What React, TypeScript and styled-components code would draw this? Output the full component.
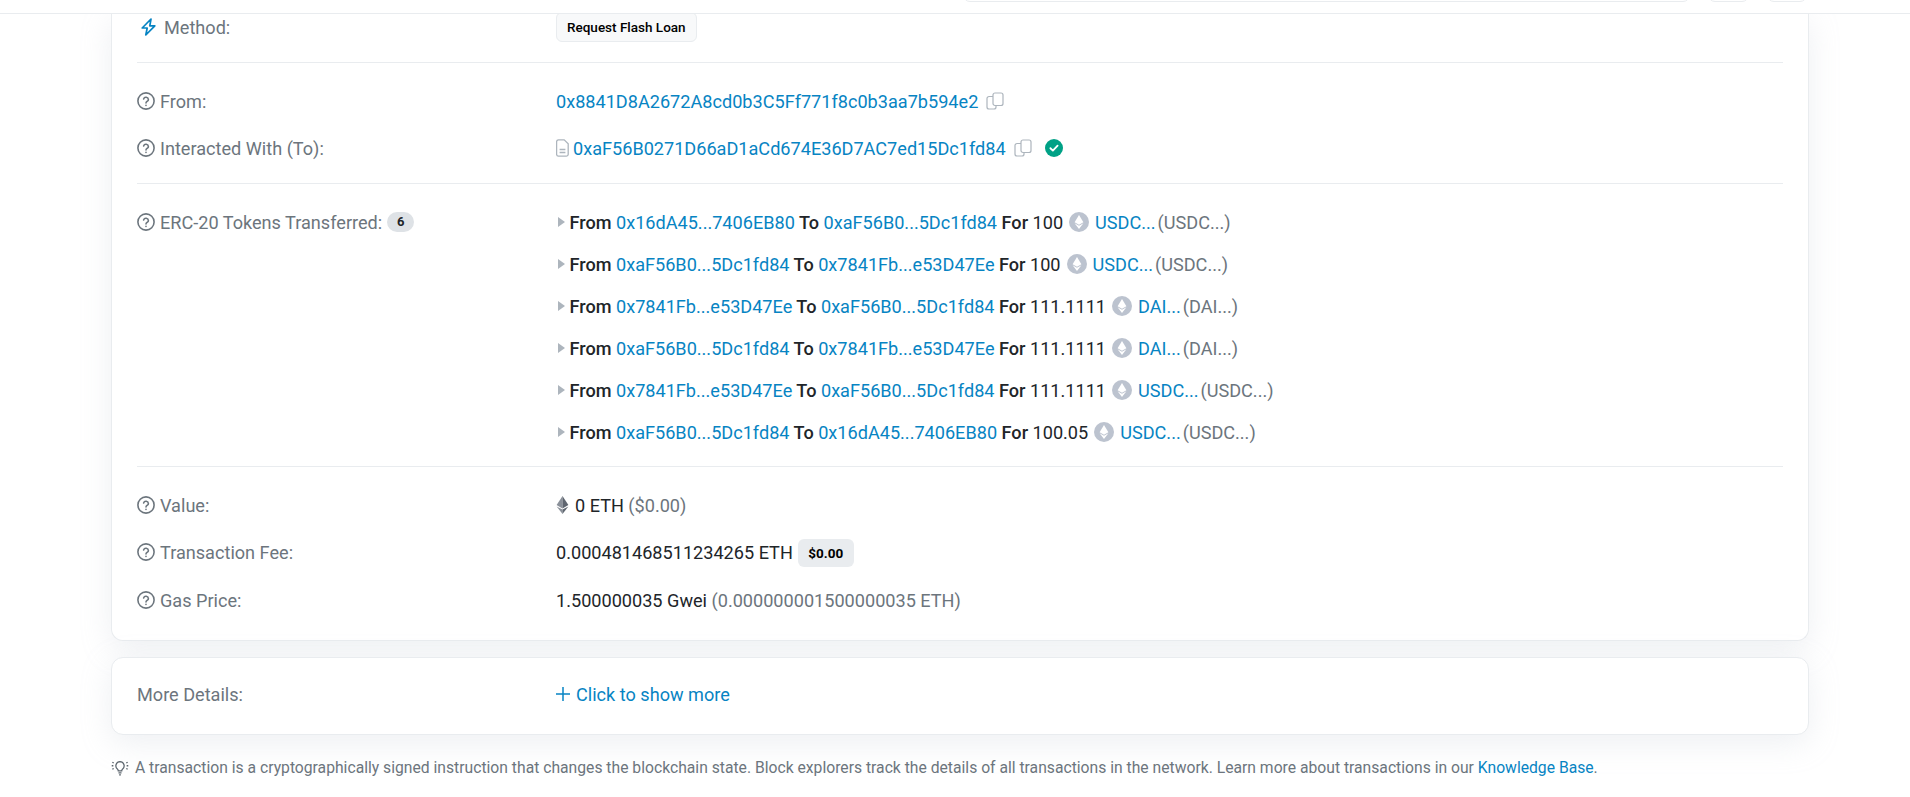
import styled, { createGlobalStyle } from 'styled-components';

const GlobalStyle = createGlobalStyle`
  html, body {
    margin: 0;
    height: 100%;
    overflow: hidden;
    background: #fff;
  }
  body {
    font-family: Roboto, "Liberation Sans", sans-serif;
    font-size: 18.13px;
    color: #212529;
  }
`;

const Header = styled.header`
  position: relative;
  z-index: 2;
  height: 14px;
  display: flex;
  justify-content: flex-end;
  align-items: flex-end;
  gap: 18px;
  padding: 0 103px 11px 0;
  background: #fff;
  border-bottom: 1px solid #e9ecef;
  overflow: hidden;
  box-sizing: border-box;
`;

const HeaderBox = styled.div<{ $width: number }>`
  width: ${(p) => p.$width}px;
  height: 30px;
  flex: none;
  box-sizing: border-box;
  border: 1px solid #e9ecef;
  border-radius: 7px;
`;

const Main = styled.main`
  padding: 0 101px 0 111px;
`;

const Card = styled.section<{ $clipped?: boolean }>`
  background: #fff;
  border: 1px solid #e9ecef;
  border-top: ${(p) => (p.$clipped ? 'none' : '1px solid #e9ecef')};
  border-radius: ${(p) => (p.$clipped ? '0 0 12px 12px' : '12px')};
  box-shadow: 0 8px 30px rgba(189, 197, 209, 0.25);
  padding: 0 25px;
  & + & {
    margin-top: 16px;
  }
`;

const Section = styled.div<{ $pad: string; $ruled?: boolean }>`
  padding: ${(p) => p.$pad};
  display: flex;
  flex-direction: column;
  border-bottom: ${(p) => (p.$ruled ? '1px solid #e9ecef' : 'none')};
`;

const Row = styled.div<{ $height?: number }>`
  display: flex;
  align-items: flex-start;
  min-height: ${(p) => p.$height ?? 47}px;
`;

const Label = styled.div<{ $height?: number; $gap?: number; $inset?: number }>`
  width: ${(p) => 419 - (p.$inset ?? 0)}px;
  margin-left: ${(p) => p.$inset ?? 0}px;
  flex: none;
  display: flex;
  align-items: center;
  gap: ${(p) => p.$gap ?? 5}px;
  height: ${(p) => p.$height ?? 24}px;
  color: #6c757d;
`;

const Value = styled.div`
  display: flex;
  align-items: center;
  min-height: 24px;
  white-space: nowrap;
`;

const Link = styled.a`
  color: #0784c3;
  text-decoration: none;
`;

const ShowMore = styled(Link)`
  display: inline-flex;
  align-items: center;
  gap: 6px;
`;

const Muted = styled.span`
  color: #6c757d;
`;

const MethodTag = styled.span`
  display: inline-flex;
  align-items: center;
  height: 30px;
  margin: -3px 0;
  padding: 0 10px;
  box-sizing: border-box;
  font-size: 13.5px;
  font-weight: 500;
  color: #000;
  background: #f8f9fa;
  border: 1px solid #e9ecef;
  border-radius: 6px;
`;

const CountBadge = styled.span`
  display: inline-block;
  width: 27px;
  height: 20px;
  line-height: 20px;
  text-align: center;
  font-size: 13px;
  font-weight: 700;
  color: #212529;
  background: #dee2e6;
  border-radius: 10px;
`;

const FeeBadge = styled.span`
  display: inline-flex;
  align-items: center;
  height: 28px;
  padding: 0 10.5px;
  margin: -1px 0 -3px 5px;
  font-size: 13.5px;
  font-weight: 700;
  color: #000;
  background: #e9ecef;
  border-radius: 6px;
`;

const TokenRows = styled.div`
  display: flex;
  flex-direction: column;
`;

const TokenRow = styled.div`
  display: flex;
  align-items: center;
  height: 42px;
  white-space: pre;
`;

const Caret = styled.span`
  width: 0;
  height: 0;
  margin: 0 5px 0 1.5px;
  border-style: solid;
  border-width: 5px 0 5px 7px;
  border-color: transparent transparent transparent #adb5bd;
`;

const Strong = styled.b`
  font-weight: 500;
`;

const IconWrap = styled.span<{ $gap?: number; $after?: number }>`
  display: inline-flex;
  flex: none;
  margin-left: ${(p) => p.$gap ?? 0}px;
  margin-right: ${(p) => p.$after ?? 0}px;
`;

const TokenName = styled(Link)`
  margin-right: 2px;
`;

const Footnote = styled.p`
  display: flex;
  align-items: center;
  gap: 6px;
  margin: 23px 0 0;
  font-size: 15.7px;
  color: #6c757d;
  white-space: nowrap;
`;

function HelpIcon() {
  return (
    <svg width="18" height="18" viewBox="0 0 24 24" fill="none" stroke="#6c757d" strokeWidth="2.1" strokeLinecap="round">
      <circle cx="12" cy="12" r="10.8" />
      <path d="M8.8 9.2a3.3 3.3 0 0 1 6.4 1c0 2.2-3.2 2.6-3.2 4.3" />
      <path d="M12 17.8v.2" />
    </svg>
  );
}

function BoltIcon() {
  return (
    <svg width="15" height="18" viewBox="0 0 15 18" fill="none" stroke="#0784c3" strokeWidth="1.7" strokeLinejoin="round">
      <path d="M10 1 1.2 10h5L4.8 17 13.8 7.8h-5z" />
    </svg>
  );
}

function CopyIcon() {
  return (
    <svg width="18" height="18" viewBox="0 0 18 18" fill="none" stroke="#adb5bd" strokeWidth="1.2">
      <rect x="7" y="1" width="10" height="12.5" rx="2" />
      <path d="M7 4.5H3a2 2 0 0 0-2 2V15a2 2 0 0 0 2 2h5a2 2 0 0 0 2-2v-1.5" />
    </svg>
  );
}

function FileIcon() {
  return (
    <svg width="13" height="18" viewBox="0 0 13 18" fill="none" stroke="#adb5bd" strokeWidth="1.3">
      <path d="M2.4.8h5.8l4 4v10.4a2 2 0 0 1-2 2H2.4a2 2 0 0 1-1.8-2V2.8A2 2 0 0 1 2.4.8z" />
      <path d="M3.6 10.5h5.8M3.6 13.5h5.8" />
    </svg>
  );
}

function VerifiedIcon() {
  return (
    <svg width="18" height="18" viewBox="0 0 16 16">
      <circle cx="8" cy="8" r="8" fill="#00a186" />
      <path d="M4.8 8.2 7 10.3l4.2-4.4" fill="none" stroke="#fff" strokeWidth="1.6" strokeLinecap="round" strokeLinejoin="round" />
    </svg>
  );
}

function TokenIcon() {
  return (
    <svg width="20" height="20" viewBox="0 0 20 20">
      <circle cx="10" cy="10" r="10" fill="#bcc3cf" />
      <path d="M10 3 5.6 10.2 10 12.8l4.4-2.6z" fill="#fff" />
      <path d="M5.6 11.2 10 17l4.4-5.8L10 13.8z" fill="#fff" />
    </svg>
  );
}

function EthIcon() {
  return (
    <svg width="13" height="18" viewBox="0 0 13 18">
      <path d="M6.5 0 .6 9 6.5 12.4z" fill="#8a9099" />
      <path d="M6.5 0l5.9 9-5.9 3.4z" fill="#5f6670" />
      <path d="M.6 10.4 6.5 18v-4.4z" fill="#8a9099" />
      <path d="M12.4 10.4 6.5 18v-4.4z" fill="#5f6670" />
    </svg>
  );
}

function BulbIcon() {
  return (
    <svg width="18" height="18" viewBox="0 0 20 20" fill="none" stroke="#5c656d" strokeWidth="1.4">
      <path d="M10 3a4.6 4.6 0 0 0-2.7 8.3c.6.5.8 1 .8 1.9h3.8c0-.9.2-1.4.8-1.9A4.6 4.6 0 0 0 10 3z" />
      <path d="M8.3 15.4h3.4M9 17.6h2" />
      <path d="M1.5 3.5 3 4.5M.8 7.5h1.8M1.5 11.5 3 10.5M18.5 3.5 17 4.5M19.2 7.5h-1.8M18.5 11.5 17 10.5" />
    </svg>
  );
}

function PlusIcon() {
  return (
    <svg width="14" height="14" viewBox="0 0 14 14" stroke="#0784c3" strokeWidth="1.5">
      <path d="M7 0v14M0 7h14" />
    </svg>
  );
}

const TRANSFERS = [
  { from: '0x16dA45...7406EB80', to: '0xaF56B0...5Dc1fd84', amount: '100', name: 'USDC...', symbol: '(USDC...)' },
  { from: '0xaF56B0...5Dc1fd84', to: '0x7841Fb...e53D47Ee', amount: '100', name: 'USDC...', symbol: '(USDC...)' },
  { from: '0x7841Fb...e53D47Ee', to: '0xaF56B0...5Dc1fd84', amount: '111.1111', name: 'DAI...', symbol: '(DAI...)' },
  { from: '0xaF56B0...5Dc1fd84', to: '0x7841Fb...e53D47Ee', amount: '111.1111', name: 'DAI...', symbol: '(DAI...)' },
  { from: '0x7841Fb...e53D47Ee', to: '0xaF56B0...5Dc1fd84', amount: '111.1111', name: 'USDC...', symbol: '(USDC...)' },
  { from: '0xaF56B0...5Dc1fd84', to: '0x16dA45...7406EB80', amount: '100.05', name: 'USDC...', symbol: '(USDC...)' },
];

export default function App() {
  return (
    <>
      <GlobalStyle />
      <Header>
        <HeaderBox $width={727} />
        <HeaderBox $width={41} />
        <HeaderBox $width={40} />
      </Header>
      <Main>
        <Card $clipped>
          <Section $pad="1px 0 19px" $ruled>
            <Row $height={28}>
              <Label $inset={4} $gap={8}>
                <BoltIcon />
                Method:
              </Label>
              <Value>
                <MethodTag>Request Flash Loan</MethodTag>
              </Value>
            </Row>
          </Section>
          <Section $pad="26px 0 0" $ruled>
            <Row>
              <Label>
                <HelpIcon />
                From:
              </Label>
              <Value>
                <Link>0x8841D8A2672A8cd0b3C5Ff771f8c0b3aa7b594e2</Link>
                <IconWrap $gap={8}>
                  <CopyIcon />
                </IconWrap>
              </Value>
            </Row>
            <Row>
              <Label>
                <HelpIcon />
                Interacted With (To):
              </Label>
              <Value>
                <IconWrap $after={4}>
                  <FileIcon />
                </IconWrap>
                <Link>0xaF56B0271D66aD1aCd674E36D7AC7ed15Dc1fd84</Link>
                <IconWrap $gap={8}>
                  <CopyIcon />
                </IconWrap>
                <IconWrap $gap={13}>
                  <VerifiedIcon />
                </IconWrap>
              </Value>
            </Row>
          </Section>
          <Section $pad="17px 0 13px" $ruled>
            <Row>
              <Label $height={42}>
                <HelpIcon />
                ERC-20 Tokens Transferred:
                <CountBadge>6</CountBadge>
              </Label>
              <TokenRows>
                {TRANSFERS.map((t, i) => (
                  <TokenRow key={i}>
                    <Caret />
                    <Strong>From </Strong>
                    <Link>{t.from}</Link>
                    <Strong> To </Strong>
                    <Link>{t.to}</Link>
                    <Strong> For </Strong>
                    <span>{t.amount}</span>
                    <IconWrap $gap={6} $after={6}>
                      <TokenIcon />
                    </IconWrap>
                    <TokenName>{t.name}</TokenName>
                    <Muted>{t.symbol}</Muted>
                  </TokenRow>
                ))}
              </TokenRows>
            </Row>
          </Section>
          <Section $pad="26px 0 28px">
            <Row>
              <Label>
                <HelpIcon />
                Value:
              </Label>
              <Value>
                <IconWrap $after={6}>
                  <EthIcon />
                </IconWrap>
                0 ETH&nbsp;<Muted>($0.00)</Muted>
              </Value>
            </Row>
            <Row $height={48}>
              <Label>
                <HelpIcon />
                Transaction Fee:
              </Label>
              <Value>
                0.000481468511234265 ETH
                <FeeBadge>$0.00</FeeBadge>
              </Value>
            </Row>
            <Row $height={24}>
              <Label>
                <HelpIcon />
                Gas Price:
              </Label>
              <Value>
                1.500000035 Gwei&nbsp;<Muted>(0.000000001500000035 ETH)</Muted>
              </Value>
            </Row>
          </Section>
        </Card>
        <Card>
          <Section $pad="24px 0 28px">
            <Row $height={24}>
              <Label>More Details:</Label>
              <Value>
                <ShowMore>
                  <PlusIcon />
                  Click to show more
                </ShowMore>
              </Value>
            </Row>
          </Section>
        </Card>
        <Footnote>
          <BulbIcon />
          <span>
            A transaction is a cryptographically signed instruction that changes the blockchain state. Block explorers track the details of all transactions in the network. Learn more about transactions in our <Link>Knowledge Base</Link>.
          </span>
        </Footnote>
      </Main>
    </>
  );
}
